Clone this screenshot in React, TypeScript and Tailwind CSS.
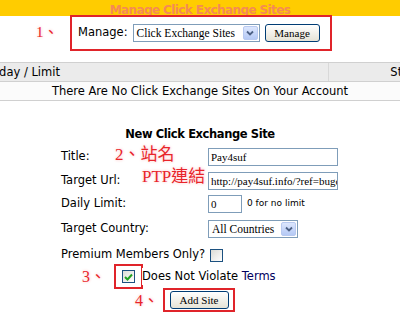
import React from 'react';

const sans = "font-['DejaVu_Sans',Verdana,sans-serif]";
const serif = "font-['Liberation_Serif','Noto_Sans_CJK_TC',serif]";
const note = `${serif} text-[#e8242a] [text-shadow:0_0_2px_#fff,0_0_3px_#ffb0b0]`;

function XpSelect({ value, width }: { value: string; width: string }) {
  return (
    <div className={`flex items-stretch h-[18px] border border-[#7f9db9] bg-white ${width}`}>
      <span className={`flex-1 pl-[3px] text-[11.5px] leading-[16px] text-black ${serif} whitespace-nowrap overflow-hidden`}>
        {value}
      </span>
      <span className="w-[15px] m-[1px] rounded-[2px] bg-gradient-to-b from-[#dce6fd] to-[#b5c9f5] border border-[#b8c9f0] flex items-center justify-center">
        <svg width="8" height="6" viewBox="0 0 8 6">
          <path d="M1 1.5 L4 4.5 L7 1.5" stroke="#4d6185" strokeWidth="1.8" fill="none" />
        </svg>
      </span>
    </div>
  );
}

function XpButton({ label, width }: { label: string; width: string }) {
  return (
    <button
      type="button"
      className={`h-[18px] ${width} rounded-[3px] border border-[#003c74] bg-gradient-to-b from-white to-[#e6e3d6] text-[11px] leading-[14px] text-black ${serif}`}
    >
      {label}
    </button>
  );
}

function XpInput({ value, width }: { value: string; width: string }) {
  return (
    <div className={`h-[18px] ${width} border border-[#7f9db9] bg-white pl-[2px] text-[11px] leading-[16px] text-black ${serif} whitespace-nowrap overflow-hidden`}>
      {value}
    </div>
  );
}

function XpCheck({ checked }: { checked?: boolean }) {
  return (
    <span className="w-[13px] h-[13px] border border-[#1c5180] bg-gradient-to-br from-[#dcdcd6] to-white flex items-center justify-center">
      {checked && (
        <svg width="9" height="8" viewBox="0 0 9 8">
          <path d="M1 4 L3.5 6.5 L8 1.5" stroke="#21a121" strokeWidth="2" fill="none" />
        </svg>
      )}
    </span>
  );
}

export default function App() {
  return (
    <div className={`w-[400px] h-[316px] bg-white overflow-hidden ${sans} text-[11.5px] text-black`}>
      {/* Header */}
      <div className="h-[16px] bg-[#ffcc00] overflow-hidden text-center">
        <span className={`block pt-[3px] text-[12px] leading-[14px] font-bold tracking-[-0.6px] text-[#f58a55] ${sans}`}>
          Manage Click Exchange Sites
        </span>
      </div>

      {/* Manage bar */}
      <div className="h-[47px] relative">
        <span className={`absolute left-[36px] top-[10px] text-[15px] leading-[14px] ${note}`}>1、</span>
        <div className="ml-[70px] mt-[-1px] w-[262px] h-[36px] border-2 border-[#e0242a] flex items-center pl-[6px] gap-[5px]">
          <span className="text-[11.5px]">Manage:</span>
          <XpSelect value="Click Exchange Sites" width="w-[127px]" />
          <XpButton label="Manage" width="w-[55px]" />
        </div>
      </div>

      {/* Table */}
      <div className="border-t border-[#d0d0d0]">
        <div className="flex h-[19px] bg-[#ebebeb] border-b border-[#d0d0d0] text-[11.5px] leading-[18px]">
          <div className="w-[328px] overflow-hidden whitespace-nowrap">
            <span className="ml-[-13px]">Today / Limit</span>
          </div>
          <div className="flex-1 border-l border-[#d8d8d8] text-right whitespace-nowrap overflow-hidden">
            <span className="mr-[-27px]">Status</span>
          </div>
        </div>
        <div className="h-[19px] bg-[#fbfbfb] border-b border-[#d0d0d0] text-center text-[11.5px] leading-[18px]">
          There Are No Click Exchange Sites On Your Account
        </div>
      </div>

      {/* New site form */}
      <div className="pt-[26px] text-center text-[11.5px] font-bold tracking-[-0.4px] leading-[14px]">New Click Exchange Site</div>

      <div className="pl-[61px] pt-[7px] text-[11.5px] relative">
        <div className="flex items-center h-[18px] relative">
          <span className="w-[147px]">Title:</span>
          <XpInput value="Pay4suf" width="w-[130px]" />
          <span className={`absolute left-[54px] top-[-2px] text-[17px] leading-[18px] ${note}`}>2、站名</span>
        </div>
        <div className="flex items-center h-[18px] mt-[6px] relative">
          <span className="w-[147px]">Target Url:</span>
          <XpInput value="http://pay4suf.info/?ref=bugcleaner" width="w-[130px]" />
          <span className={`absolute left-[81px] top-[-4px] text-[17px] leading-[18px] ${note}`}>PTP連結</span>
        </div>
        <div className="flex items-center h-[18px] mt-[5px]">
          <span className="w-[147px]">Daily Limit:</span>
          <XpInput value="0" width="w-[34px]" />
          <span className="ml-[5px] text-[9px]">0 for no limit</span>
        </div>
        <div className="flex items-center h-[18px] mt-[7px]">
          <span className="w-[147px]">Target Country:</span>
          <XpSelect value="All Countries" width="w-[90px]" />
        </div>
        <div className="flex items-center h-[18px] mt-[8px] gap-[5px]">
          <span>Premium Members Only?</span>
          <XpCheck />
        </div>

        <div className="flex items-center relative">
          <span className={`absolute left-[21px] top-[6px] text-[16px] leading-[14px] ${note}`}>3、</span>
          <div className="ml-[53px] w-[29px] h-[25px] border-2 border-[#e0242a] flex items-center justify-center">
            <XpCheck checked />
          </div>
          <span className="ml-[-1px] bg-white">
            Does Not Violate <span className="text-[#00005e]">Terms</span>
          </span>
        </div>

        <div className="flex items-center mt-[-1px] relative">
          <span className={`absolute left-[74px] top-[6px] text-[16px] leading-[14px] ${note}`}>4、</span>
          <div className="ml-[102px] w-[72px] h-[24px] border-2 border-[#e0242a] flex items-center justify-center">
            <XpButton label="Add Site" width="w-[59px]" />
          </div>
        </div>
      </div>
    </div>
  );
}
